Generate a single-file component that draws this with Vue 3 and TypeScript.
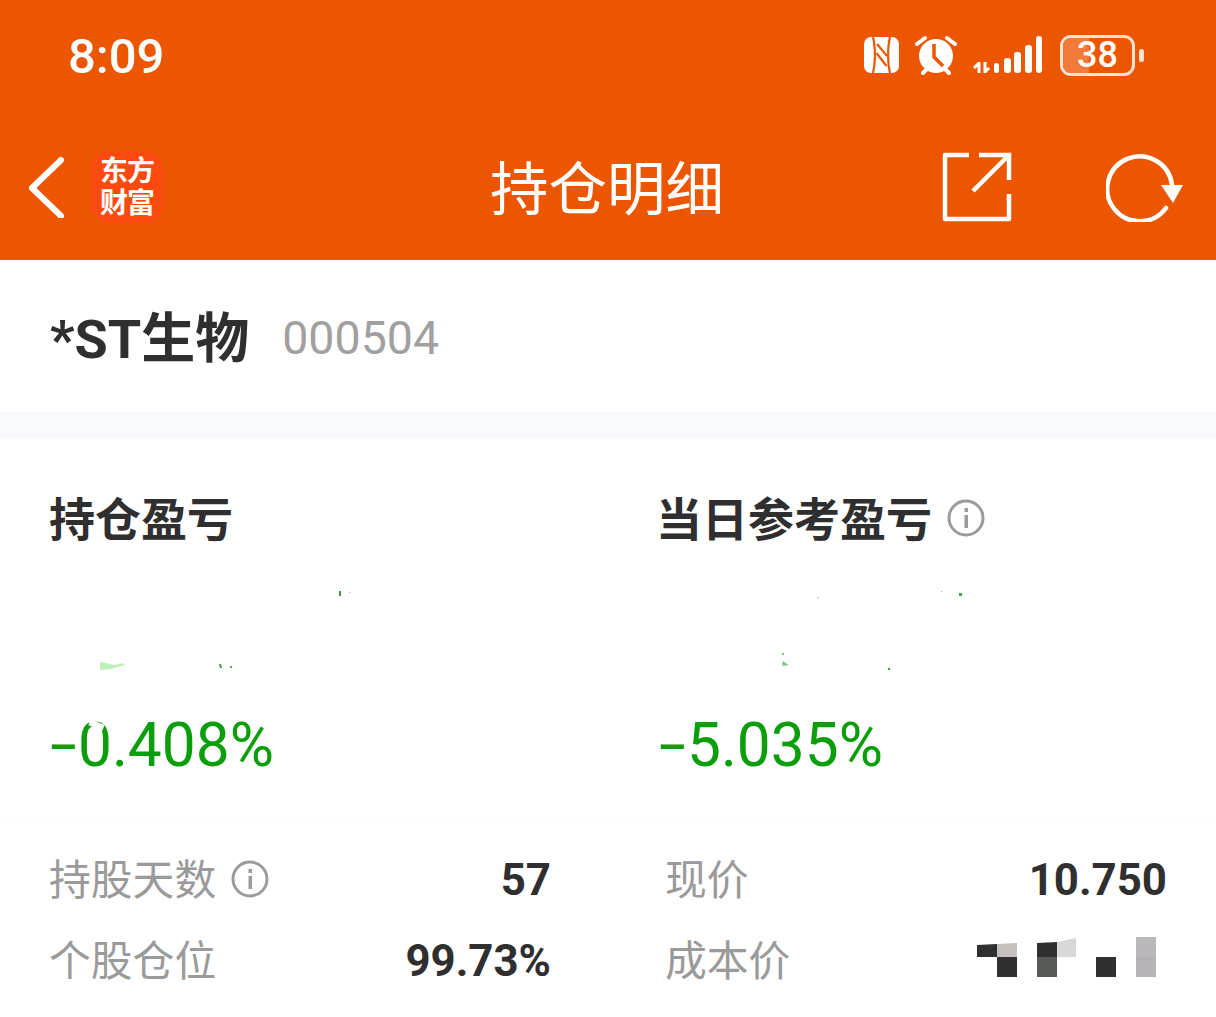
<template>
  <div class="page">
    <header class="top">
      <div class="status-bar">
        <span class="time">8:09</span>
        <div class="status-icons">
          <svg class="ic-nfc" width="37" height="38" viewBox="0 0 37 38">
            <path fill="#fff" d="M8 1h21a7 7 0 0 1 7 7v22a7 7 0 0 1-7 7H8a7 7 0 0 1-7-7V8a7 7 0 0 1 7-7z" />
            <path fill="none" stroke="#ec5600" stroke-width="2.200" d="M10 1c2.500 10 2.500 26 0 36M27 1c-2.500 10-2.500 26 0 36M14 8l10 12M13.500 17l10 13" />
          </svg>
          <svg class="ic-alarm" width="42" height="40" viewBox="0 0 42 40">
            <circle cx="21" cy="21" r="17" fill="#fff" />
            <path fill="none" stroke="#ec5600" stroke-width="3.500" d="M19 9v13l9 9" />
            <path fill="none" stroke="#fff" stroke-width="4" stroke-linecap="round" d="M2 9l8-6M40 9l-8-6M8 38l3-3M34 38l-3-3" />
          </svg>
          <svg class="ic-signal" width="72" height="40" viewBox="0 0 72 40">
            <path fill="none" stroke="#fff" stroke-width="3" d="M7 27v11M7 28l-5 5M13 27v11M13 37l4-4" />
            <g fill="#fff">
              <rect x="22" y="28" width="5" height="10" rx="2.500" />
              <rect x="32" y="23" width="7" height="15" rx="3" />
              <rect x="42" y="17" width="7" height="21" rx="3" />
              <rect x="53" y="10" width="7" height="28" rx="3" />
              <rect x="64" y="1" width="6" height="37" rx="3" />
            </g>
          </svg>
          <div class="battery">
            <div class="battery-shell">
              <div class="battery-fill"></div>
              <span class="battery-num">38</span>
            </div>
            <span class="battery-nub"></span>
          </div>
        </div>
      </div>
      <nav class="nav">
        <div class="nav-left">
          <svg width="38" height="62" viewBox="0 0 38 62">
            <path fill="none" stroke="#fff" stroke-width="6" stroke-linecap="round" stroke-linejoin="round" d="M33 4 4 32l29 28" />
          </svg>
          <div class="logo">东方<br />财富</div>
        </div>
        <h1 class="nav-title">持仓明细</h1>
        <div class="nav-right">
          <svg width="70" height="70" viewBox="0 0 70 70">
            <path fill="none" stroke="#fff" stroke-width="4.500" stroke-linejoin="round" d="M27 3H3v64h64V42" />
            <path fill="none" stroke="#fff" stroke-width="4.500" d="M37 3h30v25M66 4 31 39" />
          </svg>
          <svg width="78" height="70" viewBox="0 0 78 70">
            <path fill="none" stroke="#fff" stroke-width="4.500" stroke-linecap="round" d="M60 56A32.500 32.500 0 1 1 66 33" />
            <path fill="#fff" d="M55 33h22L67 51z" />
          </svg>
        </div>
      </nav>
    </header>

    <section class="stock">
      <span class="stock-name">*ST生物</span>
      <span class="stock-code">000504</span>
    </section>
    <div class="band"></div>

    <section class="profit">
      <div v-for="p in profits" :key="p.title" class="profit-col">
        <h2 class="profit-title">
          {{ p.title }}
          <svg v-if="p.info" class="info" width="38" height="38" viewBox="0 0 38 38">
            <circle cx="19" cy="19" r="17" fill="none" stroke="#9b9b9b" stroke-width="3" />
            <rect x="17.500" y="9" width="3.500" height="4" fill="#9b9b9b" />
            <rect x="17.500" y="16" width="3.500" height="13" fill="#9b9b9b" />
          </svg>
        </h2>
        <div class="amount">
          <svg width="400" height="100" viewBox="0 0 400 100">
            <path v-for="(d, i) in p.specks" :key="i" :d="d.path" :fill="d.color" />
          </svg>
        </div>
        <div class="percent">
          <span class="minus">-</span>{{ p.percent }}
          <span v-if="p.nick" class="nick"></span>
        </div>
      </div>
    </section>

    <section class="detail">
      <div class="detail-col">
        <div class="row">
          <span class="label">持股天数
            <svg class="info" width="38" height="38" viewBox="0 0 38 38">
              <circle cx="19" cy="19" r="17" fill="none" stroke="#9b9b9b" stroke-width="3" />
              <rect x="17.500" y="9" width="3.500" height="4" fill="#9b9b9b" />
              <rect x="17.500" y="16" width="3.500" height="13" fill="#9b9b9b" />
            </svg>
          </span>
          <span class="value">57</span>
        </div>
        <div class="row">
          <span class="label">个股仓位</span>
          <span class="value">99.73%</span>
        </div>
      </div>
      <div class="detail-col">
        <div class="row">
          <span class="label">现价</span>
          <span class="value">10.750</span>
        </div>
        <div class="row">
          <span class="label">成本价</span>
          <svg class="mosaic" width="180" height="40" viewBox="0 0 180 40">
            <path d="M1 8 21 7v13H1z" fill="#303030" />
            <path d="M21 7l20-1v14H21z" fill="#c4c0c0" />
            <rect x="21" y="20" width="20" height="20" fill="#303030" />
            <path d="M61 6l20-1v15H61z" fill="#303030" />
            <path d="M81 5l19-4v19H81z" fill="#d8d8d8" />
            <rect x="61" y="20" width="20" height="20" fill="#565956" />
            <rect x="120" y="20" width="20" height="20" fill="#303030" />
            <rect x="160" y="0" width="20" height="20" fill="#bab8ba" />
            <rect x="160" y="20" width="20" height="20" fill="#b5b3b5" />
          </svg>
        </div>
      </div>
    </section>
  </div>
</template>

<script setup lang="ts">
interface Speck {
  path: string
  color: string
}

interface Profit {
  title: string
  info: boolean
  percent: string
  nick: boolean
  specks: Speck[]
}

const profits: Profit[] = [
  {
    title: '持仓盈亏',
    info: false,
    percent: '0.408%',
    nick: true,
    specks: [
      { path: 'M289 2h2v5h-2z', color: '#3f9a3f' },
      { path: 'M299 3h1v1h-1z', color: '#8cc88c' },
      { path: 'M50 73l15 3 8-2 2 2-14 4-11 1z', color: '#bdf0b8' },
      { path: 'M169 75h2l1 4h-2z', color: '#3f9a3f' },
      { path: 'M180 77h2v2h-2z', color: '#5aaa5a' },
    ],
  },
  {
    title: '当日参考盈亏',
    info: true,
    percent: '5.035%',
    nick: false,
    specks: [
      { path: 'M300 4h3v3h-3z', color: '#4ca24c' },
      { path: 'M282 2h1v1h-1z', color: '#7cbc7c' },
      { path: 'M158 8h2v1h-2z', color: '#a8d4a8' },
      { path: 'M124 72l4 3 2 1-6 1-1-2zM123 64h2v2h-2z', color: '#8cc08c' },
      { path: 'M229 79h2v2h-2z', color: '#4c9a4c' },
    ],
  },
]
</script>

<style scoped>
.page {
  width: 1216px;
  height: 1017px;
  overflow: hidden;
  background: #fff;
  color: #2f2f2f;
  font-family: Roboto, "Noto Sans CJK SC", sans-serif;
}

/* orange header */
.top {
  background: #ec5600;
  color: #fff;
}
.status-bar {
  height: 120px;
  display: flex;
  justify-content: space-between;
  align-items: center;
  padding: 0 72px 10px 68px;
  box-sizing: border-box;
}
.time {
  font-size: 49px;
  font-weight: 500;
  line-height: 1;
  margin-top: 2px;
}
.status-icons {
  display: flex;
  align-items: center;
  gap: 15px;
}
.battery {
  display: flex;
  align-items: center;
  gap: 4px;
  margin-left: 1px;
}
.battery-shell {
  position: relative;
  width: 75px;
  height: 41px;
  box-sizing: border-box;
  border: 3px solid #fbe3d2;
  border-radius: 11px;
  overflow: hidden;
  display: flex;
  align-items: center;
  justify-content: center;
}
.battery-fill {
  position: absolute;
  left: 0;
  top: 0;
  bottom: 0;
  width: 38%;
  background: #f27b3b;
}
.battery-num {
  position: relative;
  font-size: 36px;
  font-weight: 500;
  line-height: 1;
}
.battery-nub {
  width: 5px;
  height: 13px;
  border-radius: 3px;
  background: #fbe3d2;
}
.nav {
  height: 140px;
  display: grid;
  grid-template-columns: 1fr auto 1fr;
  align-items: center;
  padding: 0 32px 6px 28px;
  box-sizing: border-box;
}
.nav-left {
  display: flex;
  align-items: center;
  gap: 25px;
}
.logo {
  width: 72px;
  height: 72px;
  border-radius: 18px;
  background: #fb4a10;
  font-size: 28px;
  font-weight: 700;
  line-height: 32px;
  text-align: center;
  padding-top: 5px;
  box-sizing: border-box;
  letter-spacing: -1px;
}
.nav-title {
  margin: 6px 0 0 2px;
  font-size: 58.500px;
  font-weight: 400;
  line-height: 1;
}
.nav-right {
  display: flex;
  justify-content: flex-end;
  align-items: center;
  gap: 94px;
}

/* stock name */
.stock {
  height: 152px;
  display: flex;
  align-items: center;
  padding-left: 50px;
  gap: 33px;
}
.stock-name {
  font-size: 54px;
  font-weight: 700;
  margin-top: -4px;
}
.stock-code {
  font-size: 46.500px;
  color: #a0a0a0;
  margin-top: 4px;
}
.band {
  height: 26px;
  background: #f7f9fd;
}

/* profit blocks */
.profit {
  display: grid;
  grid-template-columns: 609px 1fr;
  padding: 55px 0 0 50px;
  height: 384px;
  box-sizing: border-box;
  border-bottom: 1px solid #fbfbfb;
}
.profit-title {
  margin: 2px 0 -2px -1px;
  height: 50px;
  display: flex;
  align-items: center;
  gap: 16px;
  font-size: 46px;
  font-weight: 700;
  line-height: 1;
}
.profit-title .info {
  margin-top: -4px;
}
.profit-col:nth-child(2) .profit-title {
  margin-left: -3px;
  gap: 15px;
}
.amount {
  height: 100px;
  margin-top: 46px;
  display: flex;
}
.percent {
  position: relative;
  margin-top: 22px;
  font-size: 60.400px;
  line-height: 70px;
  color: #0a9e0a;
}
.minus {
  display: inline-block;
  position: relative;
  top: -1px;
  width: 28px;
  transform: scaleX(1.6);
  transform-origin: left center;
}
/* the screenshot's redaction bites a notch out of the first digit */
.nick {
  position: absolute;
  left: 39px;
  top: 11px;
  width: 15px;
  height: 6px;
  background: #fff;
  transform: rotate(20deg);
}

/* detail rows */
.detail {
  display: grid;
  grid-template-columns: 500px 500px;
  column-gap: 116px;
  padding: 24px 0 0 50px;
}
.detail-col {
  display: flex;
  flex-direction: column;
  gap: 21px;
}
.row {
  height: 60px;
  display: flex;
  justify-content: space-between;
  align-items: center;
}
.label {
  display: flex;
  align-items: center;
  gap: 15px;
  font-size: 41.800px;
  color: #9a9a9a;
  margin-top: 2px;
  margin-left: -1px;
}
.label .info {
  margin-top: 3px;
}
.value {
  font-size: 43.800px;
  font-weight: 700;
  margin-top: 8px;
  margin-right: -1px;
}
.mosaic {
  margin-right: 10px;
}
</style>
